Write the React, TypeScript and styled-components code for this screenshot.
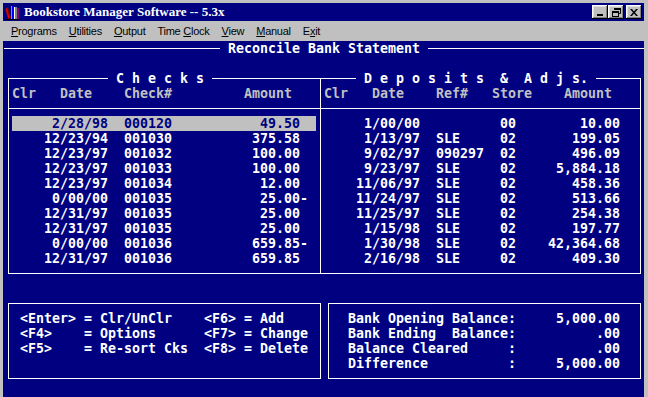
import styled, { createGlobalStyle } from "styled-components";

const NAVY = "#000080";
const GRAY = "#c0c0c0";
const cw = (n: number) => `${n * 8}px`;

const GlobalStyle = createGlobalStyle`
  html, body {
    margin: 0;
    padding: 0;
    background: ${GRAY};
  }
`;

const Window = styled.div`
  width: 648px;
  height: 397px;
  box-sizing: border-box;
  padding: 3px 4px 0 3px;
  display: flex;
  flex-direction: column;
  background: ${GRAY};
  overflow: hidden;
`;

const TitleBar = styled.div`
  height: 18px;
  flex: none;
  display: flex;
  align-items: center;
  background: ${NAVY};
  padding: 0 2px 0 1px;
`;

const AppIcon = styled.svg`
  width: 16px;
  height: 16px;
  flex: none;
`;

const TitleText = styled.div`
  flex: 1;
  margin-left: 4px;
  color: #fff;
  font: bold 13px "Liberation Serif", "Times New Roman", serif;
  white-space: nowrap;
`;

const CapButton = styled.div<{ $gap?: boolean }>`
  width: 16px;
  height: 14px;
  flex: none;
  margin-left: ${(p) => (p.$gap ? 2 : 0)}px;
  background: ${GRAY};
  box-shadow: inset -1px -1px #000, inset 1px 1px #fff, inset -2px -2px #808080,
    inset 2px 2px #dfdfdf;
  display: flex;
  align-items: center;
  justify-content: center;
`;

const MenuBar = styled.div`
  height: 20px;
  flex: none;
  display: flex;
  align-items: center;
  gap: 12px;
  padding-left: 8px;
  font: 11px "Liberation Sans", Arial, sans-serif;
  letter-spacing: -0.25px;
  color: #000;
`;

const MenuItem = styled.span`
  white-space: pre;
`;

const Accel = styled.span`
  text-decoration: underline;
`;

const Console = styled.div`
  flex: 1;
  min-height: 0;
  overflow: hidden;
  background: ${NAVY};
  padding-left: 1px;
  color: #fff;
  font-family: "DejaVu Sans Mono", "Liberation Mono", monospace;
  font-size: 13.29px;
  font-weight: bold;
  line-height: 15px;
`;

const Screen = styled.div`
  width: 640px;
`;

const TitleLine = styled.div`
  display: flex;
  align-items: center;
  height: 15px;
`;

const Rule = styled.div`
  flex: 1;
  height: 1px;
  background: #fff;
`;

const ScreenTitle = styled.div`
  padding: 0 8px;
  width: ${cw(24)};
  white-space: pre;
`;

const Frame = styled.div`
  margin: 22px 0 0 4px;
  width: 633px;
  box-sizing: border-box;
  border: 1px solid #fff;
  display: grid;
  grid-template-columns: 312px 319px;
`;

const Panel = styled.div<{ $divider?: boolean }>`
  border-right: ${(p) => (p.$divider ? "1px solid #fff" : "none")};
`;

const LegendSlot = styled.div<{ $x: number }>`
  height: 0;
  display: flex;
  padding-left: ${(p) => p.$x}px;
`;

const Legend = styled.div`
  height: 15px;
  margin-top: -8px;
  background: ${NAVY};
  white-space: pre;
`;

const PanelHead = styled.div`
  padding: 7px 0;
  border-bottom: 1px solid #fff;
`;

const PanelBody = styled.div`
  padding: 7px 0;
`;

const Row = styled.div<{ $sel?: boolean; $muted?: boolean; $w?: number }>`
  display: flex;
  height: 15px;
  margin-left: 3px;
  width: ${(p) => (p.$w ? cw(p.$w) : "auto")};
  background: ${(p) => (p.$sel ? GRAY : "transparent")};
  color: ${(p) => (p.$sel ? NAVY : p.$muted ? GRAY : "#fff")};
`;

const Cell = styled.span<{ $w: number; $right?: boolean }>`
  flex: none;
  width: ${(p) => cw(p.$w)};
  text-align: ${(p) => (p.$right ? "right" : "left")};
  white-space: pre;
`;

const BottomRow = styled.div`
  margin: 29px 0 0 4px;
  display: grid;
  grid-template-columns: 313px 313px;
  column-gap: 7px;
`;

const InfoBox = styled.div<{ $pad: number }>`
  border: 1px solid #fff;
  padding: 7px 0 7px ${(p) => p.$pad}px;
`;

const Line = styled.div`
  display: flex;
  height: 15px;
`;

const menus = [
  { pre: "", key: "P", post: "rograms" },
  { pre: "", key: "U", post: "tilities" },
  { pre: "", key: "O", post: "utput" },
  { pre: "Time ", key: "C", post: "lock" },
  { pre: "", key: "V", post: "iew" },
  { pre: "", key: "M", post: "anual" },
  { pre: "E", key: "x", post: "it" },
];

const checks = [
  { date: "2/28/98", num: "000120", amt: "49.50", sign: "" },
  { date: "12/23/94", num: "001030", amt: "375.58", sign: "" },
  { date: "12/23/97", num: "001032", amt: "100.00", sign: "" },
  { date: "12/23/97", num: "001033", amt: "100.00", sign: "" },
  { date: "12/23/97", num: "001034", amt: "12.00", sign: "" },
  { date: "0/00/00", num: "001035", amt: "25.00", sign: "-" },
  { date: "12/31/97", num: "001035", amt: "25.00", sign: "" },
  { date: "12/31/97", num: "001035", amt: "25.00", sign: "" },
  { date: "0/00/00", num: "001036", amt: "659.85", sign: "-" },
  { date: "12/31/97", num: "001036", amt: "659.85", sign: "" },
];

const deposits = [
  { date: "1/00/00", ref: "", store: "00", amt: "10.00" },
  { date: "1/13/97", ref: "SLE", store: "02", amt: "199.05" },
  { date: "9/02/97", ref: "090297", store: "02", amt: "496.09" },
  { date: "9/23/97", ref: "SLE", store: "02", amt: "5,884.18" },
  { date: "11/06/97", ref: "SLE", store: "02", amt: "458.36" },
  { date: "11/24/97", ref: "SLE", store: "02", amt: "513.66" },
  { date: "11/25/97", ref: "SLE", store: "02", amt: "254.38" },
  { date: "1/15/98", ref: "SLE", store: "02", amt: "197.77" },
  { date: "1/30/98", ref: "SLE", store: "02", amt: "42,364.68" },
  { date: "2/16/98", ref: "SLE", store: "02", amt: "409.30" },
];

const keys = [
  ["<Enter>", "Clr/UnClr", "<F6>", "Add"],
  ["<F4>", "Options", "<F7>", "Change"],
  ["<F5>", "Re-sort Cks", "<F8>", "Delete"],
];

const balances = [
  ["Bank Opening Balance:", "5,000.00"],
  ["Bank Ending  Balance:", ".00"],
  ["Balance Cleared     :", ".00"],
  ["Difference          :", "5,000.00"],
];

function BooksIcon() {
  return (
    <AppIcon viewBox="0 0 16 16">
      <path d="M1 5 L4 3 L7 14 L4 15 Z" fill="#800000" />
      <path d="M2 5 L3 4.5 L5.5 14 L4.5 14.5 Z" fill="#ff0000" />
      <rect x="7" y="2" width="3" height="13" fill="#0000ff" />
      <rect x="7" y="2" width="1" height="13" fill="#8080ff" />
      <rect x="10" y="3" width="3" height="12" fill="#808080" />
      <rect x="10" y="3" width="1" height="12" fill="#ffffff" />
      <rect x="13" y="4" width="2" height="11" fill="#800080" />
      <rect x="1" y="15" width="14" height="1" fill="#000000" />
    </AppIcon>
  );
}

function MinGlyph() {
  return (
    <svg width="8" height="8" viewBox="0 0 8 8">
      <rect x="1" y="6" width="6" height="2" fill="#000" />
    </svg>
  );
}

function RestoreGlyph() {
  return (
    <svg width="9" height="9" viewBox="0 0 9 9">
      <path d="M2.5 0.5 H8.5 V5.5 H6.5" fill="none" stroke="#000" />
      <rect x="2" y="0" width="7" height="2" fill="#000" />
      <rect x="0.5" y="3.5" width="6" height="5" fill="none" stroke="#000" />
      <rect x="0" y="3" width="7" height="2" fill="#000" />
    </svg>
  );
}

function CloseGlyph() {
  return (
    <svg width="8" height="7" viewBox="0 0 8 7">
      <path d="M0 0 L2 0 L4 2.5 L6 0 L8 0 L5 3.5 L8 7 L6 7 L4 4.5 L2 7 L0 7 L3 3.5 Z" fill="#000" />
    </svg>
  );
}

export default function App() {
  return (
    <>
      <GlobalStyle />
      <Window>
        <TitleBar>
          <BooksIcon />
          <TitleText>Bookstore Manager Software -- 5.3x</TitleText>
          <CapButton>
            <MinGlyph />
          </CapButton>
          <CapButton>
            <RestoreGlyph />
          </CapButton>
          <CapButton $gap>
            <CloseGlyph />
          </CapButton>
        </TitleBar>
        <MenuBar>
          {menus.map((m) => (
            <MenuItem key={m.post}>
              {m.pre}
              <Accel>{m.key}</Accel>
              {m.post}
            </MenuItem>
          ))}
        </MenuBar>
        <Console>
          <Screen>
            <TitleLine>
              <Rule />
              <ScreenTitle>Reconcile Bank Statement</ScreenTitle>
              <Rule />
            </TitleLine>

            <Frame>
              <Panel $divider>
                <LegendSlot $x={99}>
                  <Legend>{" C h e c k s "}</Legend>
                </LegendSlot>
                <PanelHead>
                  <Row $muted>
                    <Cell $w={6}>Clr</Cell>
                    <Cell $w={8}>Date</Cell>
                    <Cell $w={15}>Check#</Cell>
                    <Cell $w={6}>Amount</Cell>
                  </Row>
                </PanelHead>
                <PanelBody>
                  {checks.map((c, i) => (
                    <Row key={i} $sel={i === 0} $w={38}>
                      <Cell $w={12} $right>
                        {c.date}
                      </Cell>
                      <Cell $w={2} />
                      <Cell $w={6}>{c.num}</Cell>
                      <Cell $w={16} $right>
                        {c.amt}
                      </Cell>
                      <Cell $w={1}>{c.sign}</Cell>
                    </Row>
                  ))}
                </PanelBody>
              </Panel>

              <Panel>
                <LegendSlot $x={35}>
                  <Legend>{" D e p o s i t s  &  A d j s. "}</Legend>
                </LegendSlot>
                <PanelHead>
                  <Row $muted>
                    <Cell $w={6}>Clr</Cell>
                    <Cell $w={8}>Date</Cell>
                    <Cell $w={7}>Ref#</Cell>
                    <Cell $w={9}>Store</Cell>
                    <Cell $w={6}>Amount</Cell>
                  </Row>
                </PanelHead>
                <PanelBody>
                  {deposits.map((d, i) => (
                    <Row key={i}>
                      <Cell $w={12} $right>
                        {d.date}
                      </Cell>
                      <Cell $w={2} />
                      <Cell $w={8}>{d.ref}</Cell>
                      <Cell $w={2}>{d.store}</Cell>
                      <Cell $w={13} $right>
                        {d.amt}
                      </Cell>
                    </Row>
                  ))}
                </PanelBody>
              </Panel>
            </Frame>

            <BottomRow>
              <InfoBox $pad={11}>
                {keys.map(([k1, d1, k2, d2]) => (
                  <Line key={k1}>
                    <Cell $w={8}>{k1}</Cell>
                    <Cell $w={2}>=</Cell>
                    <Cell $w={13}>{d1}</Cell>
                    <Cell $w={5}>{k2}</Cell>
                    <Cell $w={2}>=</Cell>
                    <Cell $w={7}>{d2}</Cell>
                  </Line>
                ))}
              </InfoBox>
              <InfoBox $pad={19}>
                {balances.map(([label, value]) => (
                  <Line key={label}>
                    <Cell $w={21}>{label}</Cell>
                    <Cell $w={13} $right>
                      {value}
                    </Cell>
                  </Line>
                ))}
              </InfoBox>
            </BottomRow>
          </Screen>
        </Console>
      </Window>
    </>
  );
}
